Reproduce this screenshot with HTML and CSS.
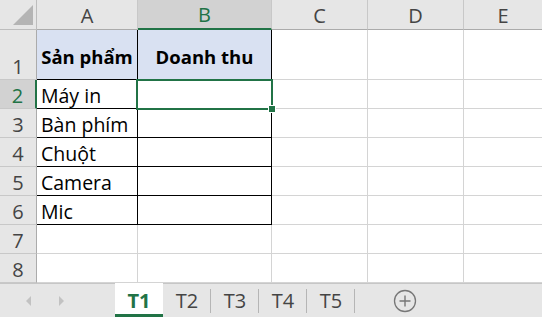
FILE: index.html
```html
<!DOCTYPE html>
<html>
<head lang="vi">
    <meta charset="UTF-8">
    <title>T1 - Sheet</title>
    <link rel="stylesheet" href="styles.css">
</head>
<body>
<div class="workbook">
    <div class="sheet">
        <div class="corner"><span class="corner-tri"></span></div>
        <div class="colhdr">A</div>
        <div class="colhdr sel">B</div>
        <div class="colhdr">C</div>
        <div class="colhdr">D</div>
        <div class="colhdr last">E</div>

        <div class="rowhdr">1</div>
        <div class="cell title bl">Sản phẩm</div>
        <div class="cell title bl">Doanh thu</div>
        <div class="cell"></div>
        <div class="cell"></div>
        <div class="cell last"></div>

        <div class="rowhdr sel">2</div>
        <div class="cell bl">Máy in</div>
        <div class="cell bl"></div>
        <div class="cell"></div>
        <div class="cell"></div>
        <div class="cell last"></div>

        <div class="rowhdr">3</div>
        <div class="cell bl">Bàn phím</div>
        <div class="cell bl"></div>
        <div class="cell"></div>
        <div class="cell"></div>
        <div class="cell last"></div>

        <div class="rowhdr">4</div>
        <div class="cell bl">Chuột</div>
        <div class="cell bl"></div>
        <div class="cell"></div>
        <div class="cell"></div>
        <div class="cell last"></div>

        <div class="rowhdr">5</div>
        <div class="cell bl">Camera</div>
        <div class="cell bl"></div>
        <div class="cell"></div>
        <div class="cell"></div>
        <div class="cell last"></div>

        <div class="rowhdr">6</div>
        <div class="cell bl">Mic</div>
        <div class="cell bl"></div>
        <div class="cell"></div>
        <div class="cell"></div>
        <div class="cell last"></div>

        <div class="rowhdr">7</div>
        <div class="cell"></div>
        <div class="cell"></div>
        <div class="cell"></div>
        <div class="cell"></div>
        <div class="cell last"></div>

        <div class="rowhdr">8</div>
        <div class="cell"></div>
        <div class="cell"></div>
        <div class="cell"></div>
        <div class="cell"></div>
        <div class="cell last"></div>

        <div class="selection"><span class="handle"></span></div>
    </div>
    <div class="tabbar">
        <div class="nav">
            <span class="arrow left"></span>
            <span class="arrow right"></span>
        </div>
        <div class="tab active">T1</div>
        <div class="tab">T2</div>
        <div class="tab">T3</div>
        <div class="tab">T4</div>
        <div class="tab">T5</div>
        <div class="addsheet">
            <svg width="24" height="24" viewBox="0 0 24 24">
                <circle cx="12" cy="12" r="10.5" fill="none" stroke="#777" stroke-width="1.3"/>
                <path d="M12 6.5v11M6.5 12h11" stroke="#777" stroke-width="1.4"/>
            </svg>
        </div>
    </div>
</div>
</body>
</html>
```

FILE: styles.css
```css
body {
    margin: 0px;
    background: #ffffff;
    font-family: "Open Sans", "Noto Sans", sans-serif;
    overflow: hidden;
}
.workbook {
    width: 542px;
    height: 317px;
    display: flex;
    flex-direction: column;
}
.sheet {
    position: relative;
    display: grid;
    grid-template-columns: 37px 101px 134px 96px 96px 78px;
    grid-template-rows: 30px 50px repeat(7, 29px);
    height: 283px;
}
.sheet > div {
    box-sizing: border-box;
}
.corner {
    background: #e6e6e6;
    border-right: 1px solid #bdbdbd;
    border-bottom: 1px solid #bdbdbd;
    position: relative;
}
.corner-tri {
    position: absolute;
    right: 3px;
    bottom: 4px;
    width: 0;
    height: 0;
    border-left: 20px solid transparent;
    border-bottom: 20px solid #b4b4b4;
}
.colhdr {
    background: #e6e6e6;
    border-right: 1px solid #c8c8c8;
    border-bottom: 1px solid #ababab;
    color: #444;
    font-size: 20px;
    text-align: center;
    line-height: 31px;
}
.colhdr.sel {
    background: #d2d2d2;
    color: #217346;
    border-bottom: 2px solid #217346;
    line-height: 30px;
}
.colhdr.last, .cell.last {
    border-right: none;
}
.rowhdr {
    background: #e6e6e6;
    border-right: 1px solid #ababab;
    border-bottom: 1px solid #c8c8c8;
    color: #444;
    font-size: 20px;
    text-align: center;
    display: flex;
    align-items: flex-end;
    justify-content: center;
    line-height: 25px;
}
.rowhdr.sel {
    background: #d2d2d2;
    color: #217346;
    border-right: 2px solid #217346;
}
.cell {
    border-right: 1px solid #d4d4d4;
    border-bottom: 1px solid #d4d4d4;
    font-size: 19.5px;
    color: #000;
    padding-left: 4px;
    display: flex;
    align-items: flex-end;
    line-height: 25px;
    white-space: nowrap;
}
.cell.bl {
    border-right-color: #000;
    border-bottom-color: #000;
}
.cell.title {
    background: #d9e1f2;
    font-weight: bold;
    justify-content: center;
    align-items: center;
    padding: 3px 0 0 0;
    font-size: 18.5px;
}
.selection {
    position: absolute;
    left: 136px;
    top: 79px;
    width: 137px;
    height: 31px;
    border: 2px solid #217346;
}
.handle {
    position: absolute;
    right: -5px;
    bottom: -5px;
    width: 6px;
    height: 6px;
    background: #217346;
    border: 1px solid #fff;
}
.tabbar {
    flex: 1;
    background: #e6e6e6;
    border-top: 1px solid #c6c6c6;
    display: flex;
    align-items: stretch;
    box-sizing: border-box;
}
.nav {
    width: 115px;
    display: flex;
    align-items: center;
    padding-left: 26px;
    box-sizing: border-box;
    gap: 28px;
}
.arrow {
    width: 0;
    height: 0;
    border-top: 5px solid transparent;
    border-bottom: 5px solid transparent;
}
.arrow.left {
    border-right: 5px solid #c2c2c2;
}
.arrow.right {
    border-left: 5px solid #c2c2c2;
}
.tab {
    width: 48px;
    font-size: 20px;
    color: #444;
    display: flex;
    align-items: center;
    justify-content: center;
    position: relative;
}
.tab::after {
    content: "";
    position: absolute;
    right: 0;
    top: 5px;
    bottom: 4px;
    width: 1px;
    background: #b5b5b5;
}
.tab.active {
    background: #fff;
    color: #217346;
    font-weight: bold;
    margin-top: -1px;
    border-bottom: 3px solid #217346;
    box-sizing: border-box;
    padding-top: 3px;
}
.tab.active::after {
    display: none;
}
.addsheet {
    margin-left: 38px;
    display: flex;
    align-items: center;
}
```
